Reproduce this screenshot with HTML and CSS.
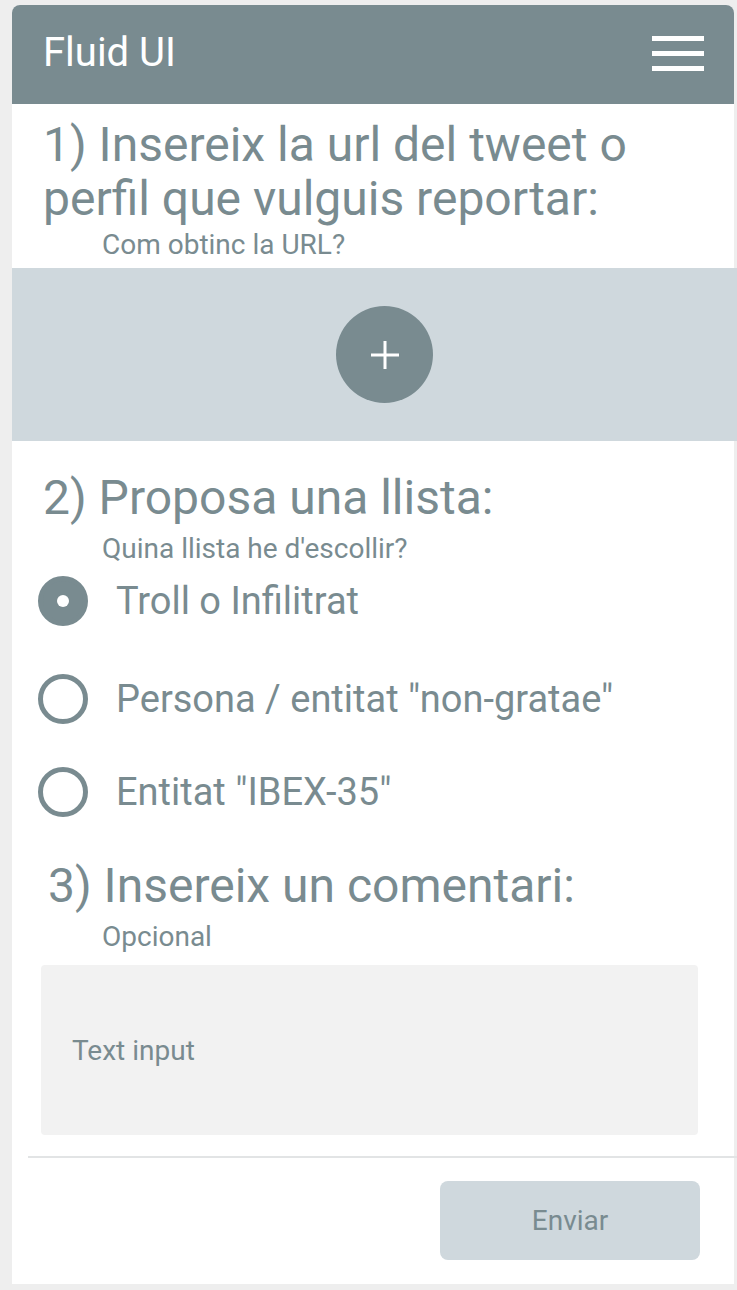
FILE: index.html
```html
<!DOCTYPE html>
<html lang="ca">
<head>
<meta charset="utf-8">
<title>Fluid UI</title>
<link rel="stylesheet" href="styles.css">
</head>
<body>
<div class="card">
  <header class="topbar">
    <span class="brand">Fluid UI</span>
    <span class="burger"><i></i><i></i><i></i></span>
  </header>

  <section class="step step1">
    <h2 class="title">1) Insereix la url del tweet o perfil que vulguis reportar:</h2>
    <p class="hint">Com obtinc la URL?</p>
  </section>

  <div class="band">
    <button class="add" type="button" aria-label="Afegir">
      <svg width="28" height="28" viewBox="0 0 28 28"><path d="M14 0v28M0 14h28" stroke="#fff" stroke-width="3"/></svg>
    </button>
  </div>

  <section class="step step2">
    <h2 class="title">2) Proposa una llista:</h2>
    <p class="hint">Quina llista he d'escollir?</p>
    <div class="options">
      <label class="opt"><span class="radio on"></span><span class="lbl">Troll o Infilitrat</span></label>
      <label class="opt"><span class="radio"></span><span class="lbl">Persona / entitat "non-gratae"</span></label>
      <label class="opt"><span class="radio"></span><span class="lbl">Entitat "IBEX-35"</span></label>
    </div>
  </section>

  <section class="step step3">
    <h2 class="title t3">3) Insereix un comentari:</h2>
    <p class="hint">Opcional</p>
    <div class="textbox">Text input</div>
  </section>

  <div class="footer">
    <button class="send" type="button">Enviar</button>
  </div>
</div>
</body>
</html>
```

FILE: styles.css
```css
* { box-sizing: border-box; }
html, body { margin: 0; padding: 0; }
body {
  background: #eeeeee;
  font-family: Roboto, "Noto Sans", sans-serif;
  color: #798b90;
}
.card {
  margin: 5px 3px 6px 12px;
  background: #ffffff;
  border-radius: 8px 8px 0 0;
  padding-bottom: 24px;
}
.topbar {
  height: 99px;
  background: #798b90;
  border-radius: 8px 8px 0 0;
  display: flex;
  align-items: center;
  justify-content: space-between;
  padding: 0 30px 0 31px;
}
.brand {
  color: #ffffff;
  font-size: 40px;
  line-height: 48px;
  padding-bottom: 3px;
}
.burger {
  display: flex;
  flex-direction: column;
  gap: 10px;
  width: 52px;
  margin-top: -2px;
}
.burger i {
  display: block;
  height: 5px;
  background: #ffffff;
}
.title {
  margin: 0;
  font-weight: 400;
  font-size: 48px;
  line-height: 54px;
}
.hint {
  margin: 0;
  font-size: 28px;
  line-height: 34px;
  padding-left: 59px;
}
.step1 { padding: 14px 40px 6px 31px; }
.step1 .hint { margin-top: 2px; }
.band {
  margin-right: -3px;
  height: 173px;
  background: #cfd8dd;
  display: flex;
  align-items: center;
  justify-content: center;
}
.add {
  width: 97px;
  height: 97px;
  border-radius: 50%;
  border: 0;
  background: #798b90;
  display: flex;
  align-items: center;
  justify-content: center;
  padding: 0;
  margin-left: 20px;
}
.step2 { padding: 30px 20px 0 31px; }
.step2 .hint { margin-top: 7px; }
.options {
  display: flex;
  flex-direction: column;
  margin: 10px 0 0 -5px;
}
.opt {
  display: flex;
  align-items: center;
  height: 50px;
  gap: 28px;
}
.opt + .opt { margin-top: 48px; }
.opt:nth-child(3) { margin-top: 43px; }
.radio {
  width: 50px;
  height: 50px;
  border-radius: 50%;
  border: 5px solid #798b90;
  flex: none;
  display: flex;
  align-items: center;
  justify-content: center;
}
.radio.on { background: #798b90; }
.radio.on::after {
  content: "";
  width: 12px;
  height: 12px;
  border-radius: 50%;
  background: #ffffff;
}
.lbl { font-size: 38px; line-height: 46px; }
.step3 { padding: 42px 36px 0 29px; }
.t3 { padding-left: 7px; }
.step3 .hint { padding-left: 61px; margin-top: 7px; }
.textbox {
  margin-top: 11px;
  height: 170px;
  background: #f2f2f2;
  border-radius: 4px;
  display: flex;
  align-items: center;
  padding-left: 31px;
  font-size: 28px;
}
.footer {
  margin: 21px -3px 0 16px;
  border-top: 2px solid #e2e4e5;
  padding: 23px 37px 0 0;
  display: flex;
  justify-content: flex-end;
}
.send {
  width: 260px;
  height: 79px;
  border: 0;
  border-radius: 8px;
  background: #cfd8dd;
  color: #798b90;
  font-family: Roboto, sans-serif;
  font-size: 28px;
}
```
